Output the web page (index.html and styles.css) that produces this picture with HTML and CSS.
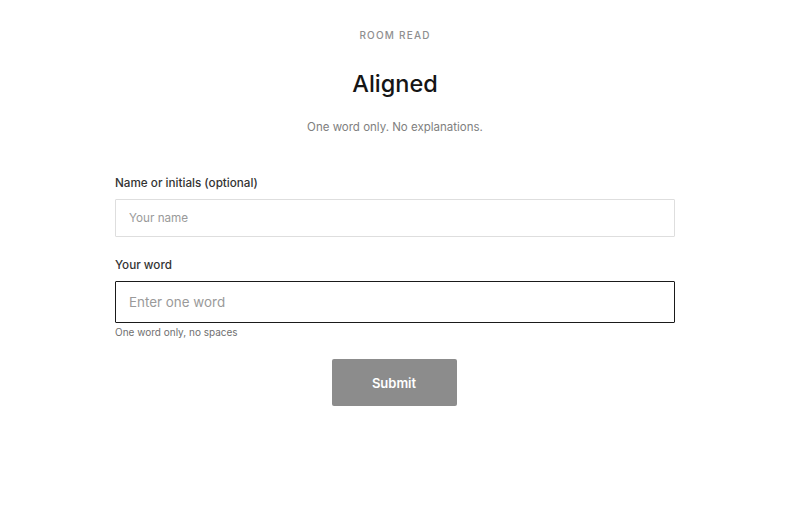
FILE: index.html
```html
<!DOCTYPE html>
<html lang="en">
<head>
<meta charset="utf-8">
<title>Room Read</title>
<link rel="stylesheet" href="styles.css">
</head>
<body>
<main class="page">
  <header class="head">
    <div class="eyebrow">ROOM READ</div>
    <h1 class="title">Aligned</h1>
    <p class="sub">One word only. No explanations.</p>
  </header>
  <form class="form">
    <div class="field">
      <label class="label" for="name">Name or initials (optional)</label>
      <input class="input input-name" id="name" type="text" placeholder="Your name">
    </div>
    <div class="field">
      <label class="label" for="word">Your word</label>
      <input class="input input-word" id="word" type="text" placeholder="Enter one word" autofocus>
      <div class="hint">One word only, no spaces</div>
    </div>
    <div class="actions">
      <button class="btn" type="button">Submit</button>
    </div>
  </form>
</main>
</body>
</html>
```

FILE: styles.css
```css
* { box-sizing: border-box; }
html, body { margin: 0; padding: 0; background: #fff; }
body {
  font-family: Inter, "Noto Sans", "Liberation Sans", sans-serif;
  color: #1a1a1a;
}
.page {
  width: 560px;
  margin-left: 115px;
  padding-top: 29px;
}
.head { text-align: center; }
.eyebrow {
  font-size: 10px;
  letter-spacing: 1.2px;
  color: #8f8f8f;
  line-height: 12px;
  font-weight: 500;
}
.title {
  margin: 28px 0 0;
  font-size: 23.5px;
  font-weight: 500;
  line-height: 30px;
  color: #151515;
}
.sub {
  margin: 21px 0 0;
  font-size: 11.5px;
  line-height: 15px;
  color: #808080;
  font-weight: 400;
}
.form { margin-top: 41px; }
.field { margin-bottom: 21px; }
.label {
  display: block;
  font-size: 11.7px;
  line-height: 15px;
  color: #333;
  font-weight: 500;
  margin-bottom: 8px;
}
.input {
  display: block;
  width: 100%;
  border: 1px solid #dedede;
  border-radius: 1px;
  padding: 0 13px;
  font-family: inherit;
  color: #222;
  background: #fff;
  outline: none;
}
.input::placeholder { color: #9a9a9a; }
.input-name { height: 38px; font-size: 11.7px; }
.input-word { height: 42px; font-size: 13.4px; border-color: #1a1a1a; }
.hint {
  margin-top: 3px;
  font-size: 10px;
  line-height: 12px;
  color: #707070;
}
.actions {
  display: flex;
  justify-content: center;
  margin-top: 1px;
  padding-right: 2px;
}
.btn {
  width: 125px;
  height: 47px;
  border: none;
  border-radius: 2px;
  background: #8c8c8c;
  color: #fff;
  font-family: inherit;
  font-size: 13px;
  font-weight: 600;
}
```
